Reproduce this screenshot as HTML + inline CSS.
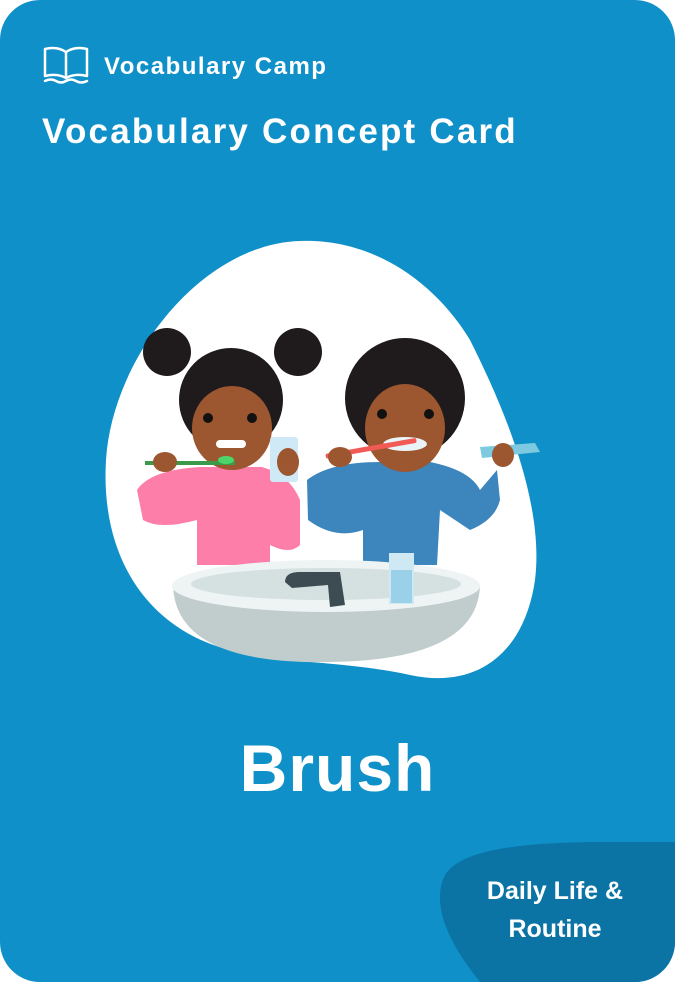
<!DOCTYPE html>
<html><head><meta charset="utf-8"><style>
html,body{margin:0;padding:0;background:#fff;}
.card{position:relative;width:675px;height:982px;background:#0f90c8;border-radius:40px;overflow:hidden;font-family:"Liberation Sans",sans-serif;color:#fff;}
.brand{position:absolute;left:104px;top:53px;font-size:24px;font-weight:bold;letter-spacing:1.5px;}
.title{position:absolute;left:42px;top:112px;font-size:35px;font-weight:bold;letter-spacing:2.2px;}
.word{position:absolute;left:0;width:675px;top:730px;text-align:center;font-size:66px;font-weight:bold;letter-spacing:1px;}
.cat{position:absolute;left:470px;width:170px;top:872px;text-align:center;font-size:25px;font-weight:bold;line-height:38px;}
svg{position:absolute;left:0;top:0;}
</style></head><body>
<div class="card">
<svg width="675" height="982" viewBox="0 0 675 982">
 <g fill="none" stroke="#fff" stroke-width="2.5" stroke-linejoin="round" stroke-linecap="round">
  <path d="M45 49 L45 76 Q57 73 66 78 Q75 73 87 76 L87 49 Q75 46 66 52 Q57 46 45 49 Z"/>
  <path d="M66 52 L66 78"/>
  <path d="M45 81 Q51 78 56 81 Q61 84 66 81 Q71 78 76 81 Q81 84 87 81"/>
 </g>
 <path d="M675 842 L590 842 C520 843 460 850 445 875 C430 905 450 945 480 982 L675 982 Z" fill="#0b74a4"/>
 <path d="M300 241 C380 238 440 290 470 340 C500 400 545 500 535 580 C525 650 480 690 410 675 C340 660 290 665 230 650 C150 630 100 560 106 460 C112 360 200 244 300 241 Z" fill="#fff"/>
 <circle cx="167" cy="352" r="24" fill="#1f1a1c"/>
 <circle cx="298" cy="352" r="24" fill="#1f1a1c"/>
 <circle cx="231" cy="400" r="52" fill="#1f1a1c"/>
 <path d="M137 490 Q150 470 200 467 L262 467 Q290 475 300 500 L300 545 Q290 555 270 545 L270 565 L197 565 L197 520 Q160 530 143 520 Z" fill="#fd7ea8"/>
 <ellipse cx="232" cy="428" rx="40" ry="42" fill="#9c5630"/>
 <circle cx="208" cy="418" r="5" fill="#111"/><circle cx="252" cy="418" r="5" fill="#111"/>
 <rect x="216" y="440" width="30" height="8" rx="4" fill="#fff"/>
 <rect x="145" y="461" width="90" height="4" fill="#3a9a4a"/>
 <ellipse cx="226" cy="460" rx="8" ry="4" fill="#4cd46a"/>
 <ellipse cx="165" cy="462" rx="12" ry="10" fill="#9c5630"/>
 <rect x="270" y="437" width="28" height="45" rx="3" fill="#cfeaf6"/>
 <ellipse cx="288" cy="462" rx="11" ry="14" fill="#9c5630"/>
 <circle cx="405" cy="398" r="60" fill="#1f1a1c"/>
 <path d="M307 480 Q330 462 380 462 L430 462 Q470 470 480 490 L497 470 L500 500 Q495 520 470 530 L440 510 L437 565 L363 565 L363 530 Q335 540 308 520 Z" fill="#3d86bd"/>
 <ellipse cx="405" cy="428" rx="40" ry="44" fill="#9c5630"/>
 <circle cx="382" cy="414" r="5" fill="#111"/><circle cx="429" cy="414" r="5" fill="#111"/>
 <ellipse cx="405" cy="444" rx="22" ry="7" fill="#e9f4f8"/>
 <rect x="325" y="446" width="92" height="5" rx="2" fill="#f25a55" transform="rotate(-10 370 448)"/>
 <ellipse cx="340" cy="457" rx="12" ry="10" fill="#9c5630"/>
 <path d="M480 447 L535 443 L540 452 L482 458 Z" fill="#7cc9e0"/>
 <ellipse cx="503" cy="455" rx="11" ry="12" fill="#9c5630"/>
 <path d="M173 585 Q175 665 330 662 Q478 660 480 585 Z" fill="#c1cccc"/>
 <ellipse cx="326" cy="586" rx="154" ry="26" fill="#eef4f4"/>
 <ellipse cx="326" cy="584" rx="135" ry="16" fill="#d5e0e0"/>
 <path d="M285 582 Q285 572 300 572 L340 572 L345 605 L330 607 L328 585 L292 588 Z" fill="#3c4c52"/>
 <rect x="389" y="553" width="25" height="51" fill="#cfe9f4"/>
 <rect x="391" y="570" width="21" height="33" fill="#9ad0e8"/>
</svg>
<div class="brand">Vocabulary Camp</div>
<div class="title">Vocabulary Concept Card</div>
<div class="word">Brush</div>
<div class="cat">Daily Life &amp;<br>Routine</div>
</div>
</body></html>
